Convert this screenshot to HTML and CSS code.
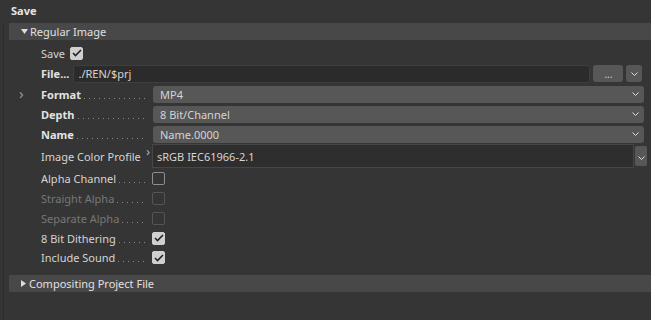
FILE: index.html
```html
<!DOCTYPE html>
<html lang="en">
<head>
  <meta charset="UTF-8" />
  <title>Save</title>
  <link rel="stylesheet" href="styles.css">
</head>
<body>
  <div class="title">Save</div>

  <div class="panel">
    <div class="group open">
      <svg class="tri" width="7" height="5" viewBox="0 0 7 5"><path d="M0 0h7L3.5 5z" fill="#ddd"/></svg>
      Regular Image
    </div>

    <div class="row">
      <span class="lbl">Save</span>
      <span class="check on"><svg width="10" height="8" viewBox="0 0 10 8"><path d="M1 4l2.5 2.5L9 1" fill="none" stroke="#222" stroke-width="1.6"/></svg></span>
    </div>

    <div class="row file-row">
      <span class="lbl bold">File...</span>
      <div class="file">./REN/$prj</div>
      <div class="btn dots">...</div>
      <div class="btn small"><svg width="7" height="4" viewBox="0 0 7 4"><path d="M0.5 0.5l3 3 3-3" fill="none" stroke="#ddd" stroke-width="1"/></svg></div>
    </div>

    <div class="row">
      <span class="expand">&rsaquo;</span>
      <span class="lbl bold lead">Format</span>
      <div class="select">MP4<svg width="7" height="4" viewBox="0 0 7 4"><path d="M0.5 0.5l3 3 3-3" fill="none" stroke="#ddd" stroke-width="1"/></svg></div>
    </div>

    <div class="row">
      <span class="lbl bold lead">Depth</span>
      <div class="select">8 Bit/Channel<svg width="7" height="4" viewBox="0 0 7 4"><path d="M0.5 0.5l3 3 3-3" fill="none" stroke="#ddd" stroke-width="1"/></svg></div>
    </div>

    <div class="row">
      <span class="lbl bold lead">Name</span>
      <div class="select">Name.0000<svg width="7" height="4" viewBox="0 0 7 4"><path d="M0.5 0.5l3 3 3-3" fill="none" stroke="#ddd" stroke-width="1"/></svg></div>
    </div>

    <div class="row tall">
      <span class="lbl profile">Image Color Profile<span class="sub">&rsaquo;</span></span>
      <div class="field">sRGB IEC61966-2.1</div>
      <div class="btn side"><svg width="7" height="4" viewBox="0 0 7 4"><path d="M0.5 0.5l3 3 3-3" fill="none" stroke="#ddd" stroke-width="1"/></svg></div>
    </div>

    <div class="row">
      <span class="lbl lead">Alpha Channel</span>
      <span class="check"></span>
    </div>

    <div class="row off">
      <span class="lbl lead">Straight Alpha</span>
      <span class="check"></span>
    </div>

    <div class="row off">
      <span class="lbl lead">Separate Alpha</span>
      <span class="check"></span>
    </div>

    <div class="row">
      <span class="lbl lead">8 Bit Dithering</span>
      <span class="check on"><svg width="10" height="8" viewBox="0 0 10 8"><path d="M1 4l2.5 2.5L9 1" fill="none" stroke="#222" stroke-width="1.6"/></svg></span>
    </div>

    <div class="row short">
      <span class="lbl lead">Include Sound</span>
      <span class="check on"><svg width="10" height="8" viewBox="0 0 10 8"><path d="M1 4l2.5 2.5L9 1" fill="none" stroke="#222" stroke-width="1.6"/></svg></span>
    </div>

    <div class="group closed">
      <svg class="tri" width="5" height="7" viewBox="0 0 5 7"><path d="M0 0v7l5-3.5z" fill="#ddd"/></svg>
      Compositing Project File
    </div>
  </div>
</body>
</html>
```

FILE: styles.css
```css
* { box-sizing: border-box; }
body {
  margin: 0;
  background: #353535;
  color: #d4d4d4;
  font-family: "Noto Sans", "Open Sans", sans-serif;
  font-size: 11px;
  height: 320px;
  overflow: hidden;
}
.title {
  height: 22px;
  line-height: 22px;
  padding-left: 11px;
  font-weight: bold;
  color: #e6e6e6;
}
.panel {
  margin-left: 3px;
  border-left: 1px solid #2c2c2c;
  height: 298px;
  padding-left: 5px;
}
.group {
  height: 17px;
  background: #484848;
  display: flex;
  align-items: center;
  padding-left: 12px;
  gap: 2px;
  color: #e0e0e0;
}
.group.open { margin-top: 1px; margin-bottom: 3px; }
.group.closed { margin-top: 8px; padding-left: 12px; gap: 3px; }
.row {
  height: 20px;
  display: flex;
  align-items: center;
  padding-left: 32px;
  position: relative;
}
.row.file-row { height: 21px; }
.row.tall { height: 24px; }
.row.short { height: 19px; }
.lbl { white-space: nowrap; margin-right: 5px; }
.bold { font-weight: bold; color: #e2e2e2; }
.lead {
  width: 111px;
  margin-right: 0;
  flex: none;
  display: flex;
  align-items: baseline;
  overflow: hidden;
}
.lead::after {
  content: "";
  flex: 1;
  height: 1px;
  margin: 0 5px 0 3px;
  background-image: linear-gradient(to right, #8a8a8a 1px, transparent 1px);
  background-size: 5px 1px;
}
.profile { width: 111px; margin-right: 0; position: relative; }
.sub {
  position: absolute;
  right: 2px;
  top: -6px;
  font-size: 12px;
  color: #bbb;
}
.expand {
  position: absolute;
  left: 10px;
  font-size: 15px;
  color: #999;
  top: -1px;
}
.off { color: #777; }
.check {
  width: 13px;
  height: 13px;
  border: 1px solid #8e8e8e;
  border-radius: 2px;
  display: flex;
  align-items: center;
  justify-content: center;
}
.off .check { border-color: #555; }
.check.on { background: #cfcfcf; border-color: #cfcfcf; }
.file {
  width: 517px;
  height: 18px;
  background: #2b2b2b;
  border: 1px solid #3e3e3e;
  border-radius: 3px;
  padding-left: 4px;
  line-height: 16px;
  margin-left: -1px;
}
.btn {
  height: 17px;
  background: #575757;
  border-radius: 3px;
  display: flex;
  align-items: center;
  justify-content: center;
  flex: none;
}
.btn.dots { width: 30px; margin-left: 3px; font-size: 10px; line-height: 10px; }
.btn.small { width: 16px; margin-left: 3px; }
.select {
  width: 491px;
  height: 17px;
  background: #575757;
  border-radius: 3px;
  display: flex;
  align-items: center;
  justify-content: space-between;
  padding: 0 5px 0 7px;
  margin-left: 1px;
}
.field {
  width: 482px;
  height: 24px;
  background: #2e2e2e;
  border: 1px solid #464646;
  display: flex;
  align-items: center;
  padding-left: 4px;
}
.btn.side {
  width: 12px;
  height: 20px;
  border-radius: 2px;
  margin-left: 1px;
  padding-top: 4px;
}
```
